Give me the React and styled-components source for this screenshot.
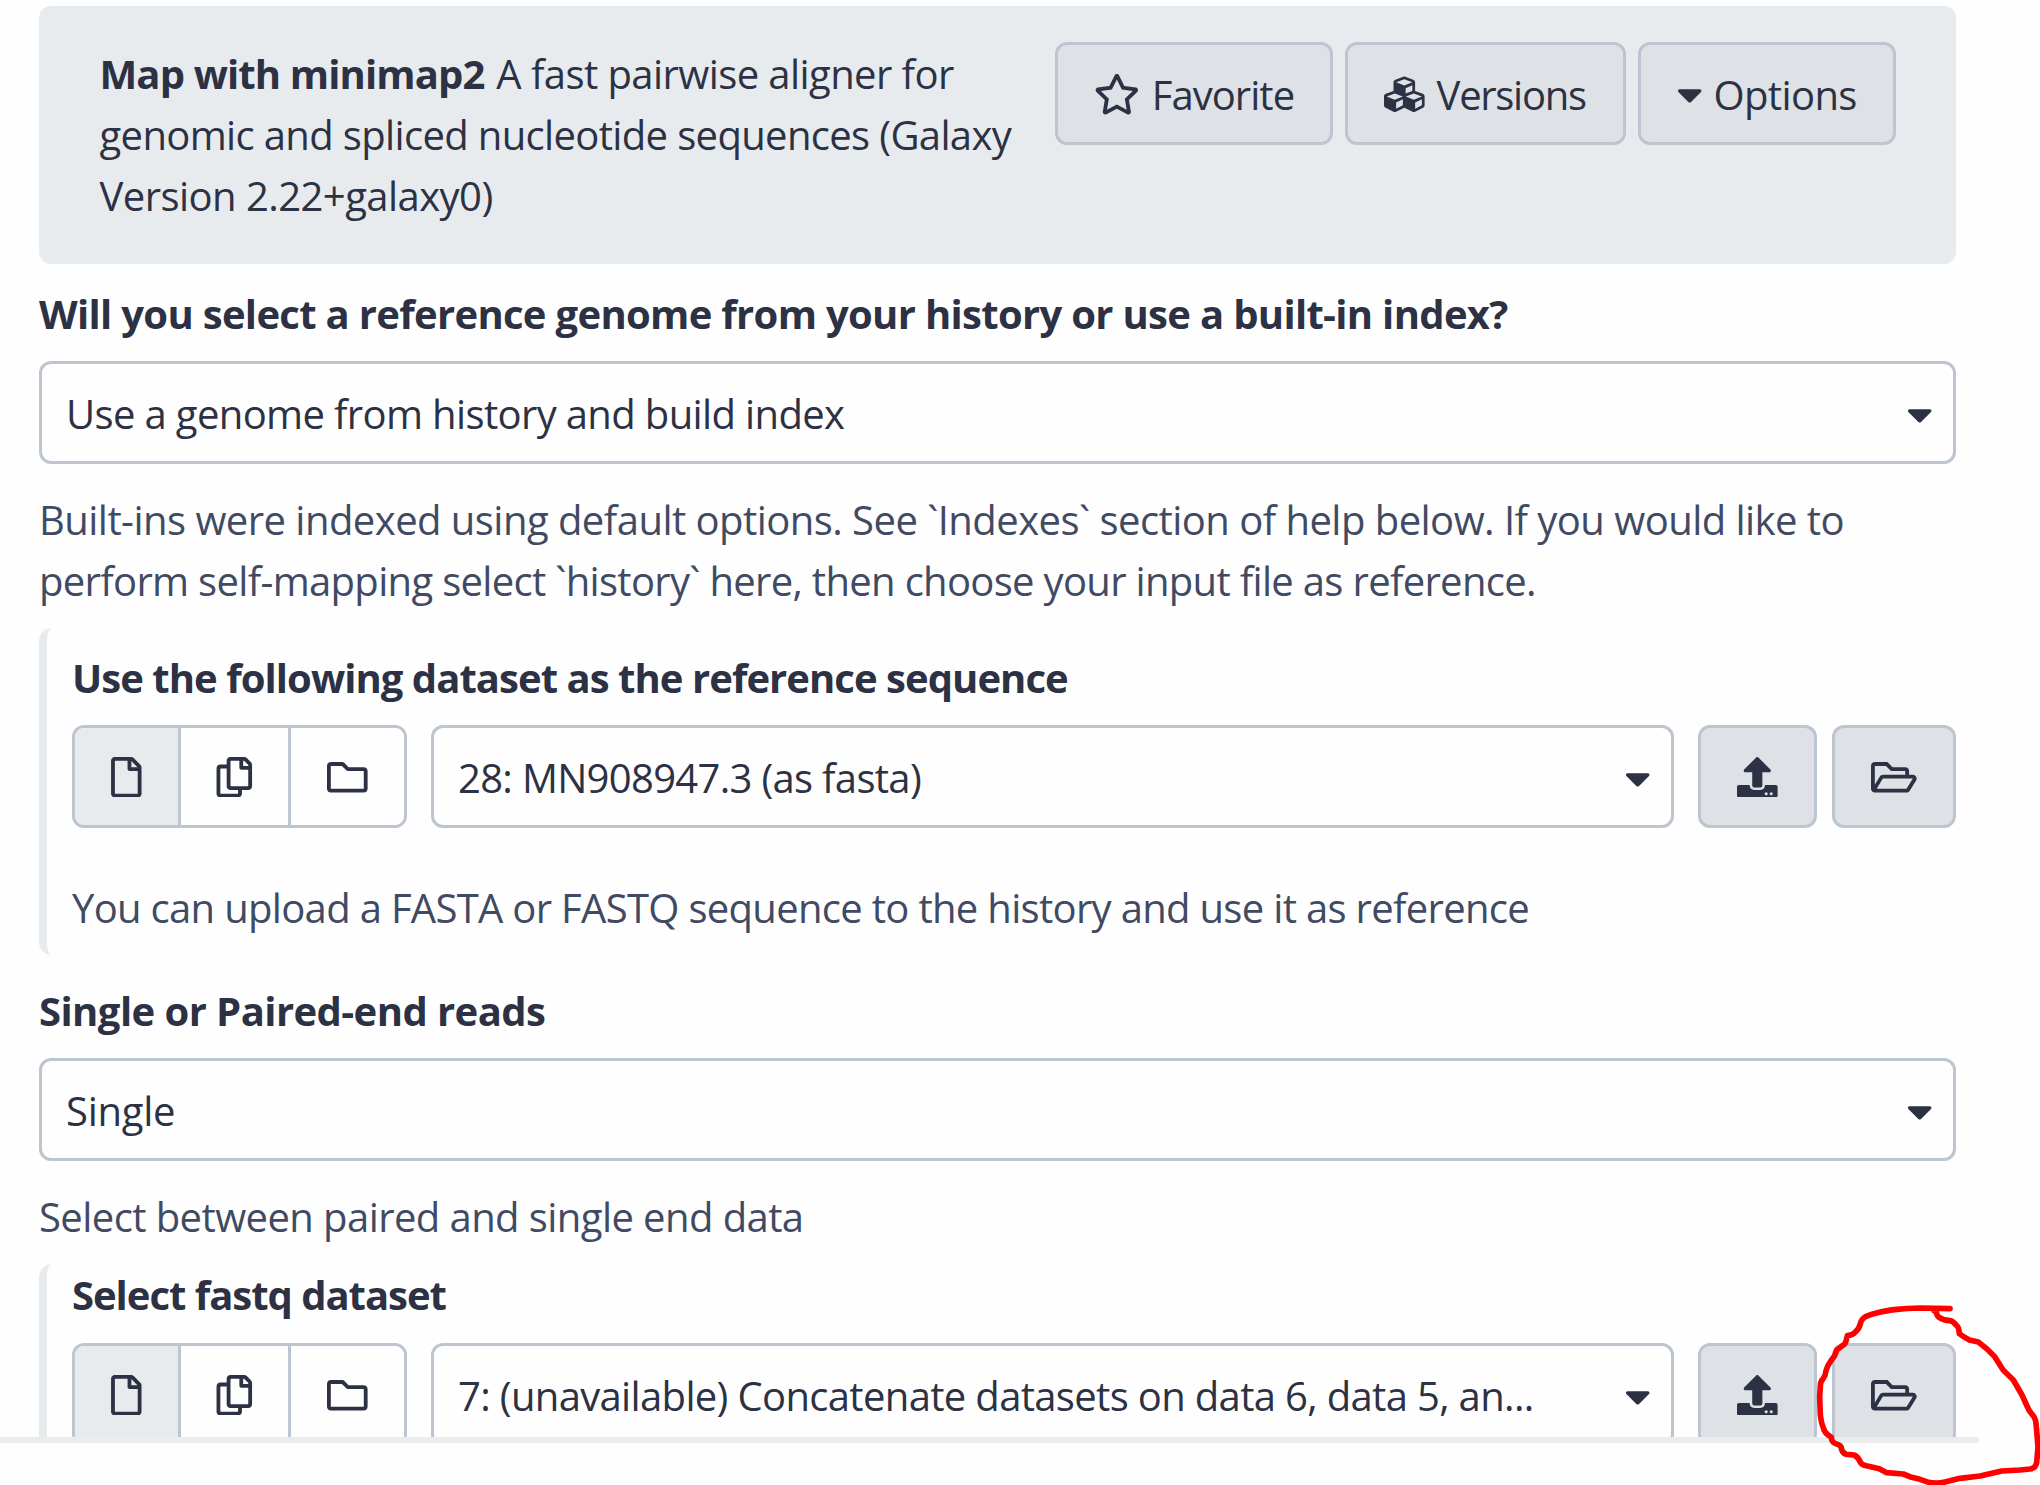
import React from 'react';
import styled, { createGlobalStyle } from 'styled-components';
import {
  FaRegStar,
  FaCubes,
  FaCaretDown,
  FaRegFile,
  FaRegCopy,
  FaRegFolder,
  FaUpload,
  FaRegFolderOpen,
} from 'react-icons/fa';

const color = {
  text: '#2c3143',
  help: '#414a63',
  border: '#bdc5d0',
  button: '#dee1e6',
  panel: '#e8ebee',
};

const GlobalStyle = createGlobalStyle`
  *, *::before, *::after { box-sizing: border-box; }
  body {
    margin: 0;
    background: #fefefe;
    color: ${color.text};
    font: 40px/61px "Open Sans", "Noto Sans", sans-serif;
    letter-spacing: -0.68px;
  }
`;

const Page = styled.div`
  position: relative;
  width: 2040px;
  height: 1485px;
  overflow: hidden;
`;

const ScrollPane = styled.main`
  height: 1437px;
  padding: 6px 84px 0 39px;
  overflow: hidden;
`;

const PaneEdge = styled.div`
  width: 1979px;
  height: 6px;
  background: #ebecec;
`;

const ToolHeader = styled.header`
  display: flex;
  justify-content: space-between;
  align-items: flex-start;
  height: 258px;
  margin-bottom: 19px;
  padding: 36px 60px 0 60.5px;
  border-radius: 12px;
  background: ${color.panel};
`;

const ToolTitle = styled.div`
  padding-top: 1px;
`;

const Line = styled.span`
  display: block;
  white-space: nowrap;
  letter-spacing: ${(p) => p.$tracking}px;
`;

const ToolName = styled.b`
  margin-right: 2px;
  letter-spacing: -0.86px;
`;

const ButtonBar = styled.div`
  display: flex;
  gap: 12px;
`;

const ToolButton = styled.button`
  display: flex;
  align-items: center;
  gap: ${(p) => p.$gap || 12}px;
  width: ${(p) => p.$width}px;
  height: 103px;
  padding: 2px 0 0 36px;
  border: 3px solid ${color.border};
  border-radius: 12px;
  background: ${color.button};
  color: ${color.text};
  font: inherit;
  letter-spacing: ${(p) => p.$tracking}px;
  white-space: nowrap;

  svg {
    flex: none;
    height: 40.6px;
    width: ${(p) => p.$icon}px;
  }
`;

const Label = styled.label`
  display: block;
  margin-bottom: ${(p) => p.$gap || 17}px;
  font-weight: 700;
  white-space: nowrap;
  letter-spacing: ${(p) => p.$tracking}px;
`;

const Help = styled.p`
  margin: ${(p) => p.$top || 25}px 0 0;
  color: ${color.help};
`;

const SelectBox = styled.div`
  flex: 1;
  display: flex;
  align-items: center;
  justify-content: space-between;
  height: 103px;
  padding: 1px 21px 0 24px;
  border: 3px solid ${color.border};
  border-radius: 12px;
  background: #fefefe;
  white-space: nowrap;
  letter-spacing: ${(p) => p.$tracking}px;

  svg {
    flex: none;
    height: 40.6px;
    width: 25.4px;
    margin-top: 2px;
  }
`;

const Nested = styled.section`
  margin: 17px 0 25px;
  padding: ${(p) => p.$top}px 0 17px 25px;
  border-left: 8px solid ${color.panel};
  border-radius: 13px;
`;

const DataRow = styled.div`
  display: flex;
`;

const Segments = styled.div`
  display: flex;
  width: 335px;
  height: 103px;
  margin-right: 24px;
  border: 3px solid ${color.border};
  border-radius: 12px;
  overflow: hidden;
`;

const Segment = styled.div`
  display: flex;
  align-items: center;
  justify-content: center;
  flex: ${(p) => (p.$width ? `none` : 1)};
  width: ${(p) => p.$width}px;
  padding-top: 1px;
  border-right: ${(p) => (p.$width ? 3 : 0)}px solid ${color.border};
  background: ${(p) => (p.$active ? color.panel : '#fefefe')};

  svg {
    height: 40.6px;
    width: 40.6px;
  }
`;

const IconButton = styled.button`
  display: flex;
  align-items: center;
  justify-content: center;
  width: ${(p) => p.$width}px;
  height: 103px;
  margin-left: ${(p) => p.$gap}px;
  padding: 1px 0 0;
  border: 3px solid ${color.border};
  border-radius: 12px;
  background: ${color.button};
  color: ${color.text};
  font: inherit;

  svg {
    flex: none;
    height: 40.6px;
    width: ${(p) => p.$icon}px;
  }
`;

const Scribble = styled.svg`
  position: absolute;
  left: 1740px;
  top: 1280px;
  width: 300px;
  height: 205px;
  fill: none;
  stroke: #fe0000;
  stroke-width: 17;
  stroke-linecap: round;
  stroke-linejoin: round;
`;

function Select({ tracking, children }) {
  return (
    <SelectBox $tracking={tracking}>
      <span>{children}</span>
      <FaCaretDown />
    </SelectBox>
  );
}

function DatasetPicker({ tracking, children }) {
  return (
    <DataRow>
      <Segments>
        <Segment $width={106} $active>
          <FaRegFile />
        </Segment>
        <Segment $width={110}>
          <FaRegCopy />
        </Segment>
        <Segment>
          <FaRegFolder />
        </Segment>
      </Segments>
      <Select tracking={tracking}>{children}</Select>
      <IconButton $width={119} $gap={24} $icon={40.6}>
        <FaUpload />
      </IconButton>
      <IconButton $width={124} $gap={15} $icon={45.7}>
        <FaRegFolderOpen />
      </IconButton>
    </DataRow>
  );
}

export default function App() {
  return (
    <Page>
      <GlobalStyle />
      <ScrollPane>
        <ToolHeader>
          <ToolTitle>
            <Line $tracking={-0.58}>
              <ToolName>Map with minimap2</ToolName> A fast pairwise aligner for
            </Line>
            <Line $tracking={-0.65}>genomic and spliced nucleotide sequences (Galaxy</Line>
            <Line $tracking={-0.55}>Version 2.22+galaxy0)</Line>
          </ToolTitle>
          <ButtonBar>
            <ToolButton $width={278} $tracking={-0.95} $icon={45.7}>
              <FaRegStar />
              Favorite
            </ToolButton>
            <ToolButton $width={281} $tracking={-1.3} $icon={40.6}>
              <FaCubes />
              Versions
            </ToolButton>
            <ToolButton $width={258} $tracking={-0.6} $gap={11} $icon={25.4}>
              <FaCaretDown />
              Options
            </ToolButton>
          </ButtonBar>
        </ToolHeader>

        <Label $tracking={-0.685}>
          Will you select a reference genome from your history or use a built-in index?
        </Label>
        <Select tracking={-0.64}>Use a genome from history and build index</Select>
        <Help>
          <Line $tracking={-0.54}>
            Built-ins were indexed using default options. See `Indexes` section of help below. If you would like to
          </Line>
          <Line $tracking={-0.682}>
            perform self-mapping select `history` here, then choose your input file as reference.
          </Line>
        </Help>

        <Nested $top={19}>
          <Label $tracking={-0.95}>Use the following dataset as the reference sequence</Label>
          <DatasetPicker tracking={-0.69}>28: MN908947.3 (as fasta)</DatasetPicker>
          <Help $top={49}>
            <Line $tracking={-0.685}>
              You can upload a FASTA or FASTQ sequence to the history and use it as reference
            </Line>
          </Help>
        </Nested>

        <Label $tracking={-0.56}>Single or Paired-end reads</Label>
        <Select tracking={-0.28}>Single</Select>
        <Help>
          <Line $tracking={-0.58}>Select between paired and single end data</Line>
        </Help>

        <Nested $top={0}>
          <Label $tracking={-1.02} $gap={18}>Select fastq dataset</Label>
          <DatasetPicker tracking={-0.66}>
            7: (unavailable) Concatenate datasets on data 6, data 5, an...
          </DatasetPicker>
        </Nested>
      </ScrollPane>
      <PaneEdge />
      <Scribble viewBox="0 0 900 615">
        <path d="M630 86L540 84Q500 85 470 88Q430 93 410 99Q380 106 371 114Q362 122 361 132Q357 147 346 156Q338 166 322 167Q319 184 314 192L290 210Q286 228 275 239Q262 256 258 272Q257 286 250 295Q240 306 241 320L239 350L241 405Q244 430 250 443Q253 457 263 464L274 472Q275 487 287 491Q303 494 304 505Q307 520 319 523L343 525Q357 534 360 545Q364 555 382 558L418 566L440 578L490 582L515 592L540 598L566 607Q590 612 615 606L660 595L720 588L785 573L840 570L870 567Q887 564 890 548L894 500L889 440Q888 415 878 405Q866 392 861 378L846 345L820 300L790 271L764 230Q740 204 715 186L688 180Q669 170 658 161Q657 142 649 136Q639 123 630 122Q611 121 597 112Q590 106 589 97L580 90" />
      </Scribble>
    </Page>
  );
}
